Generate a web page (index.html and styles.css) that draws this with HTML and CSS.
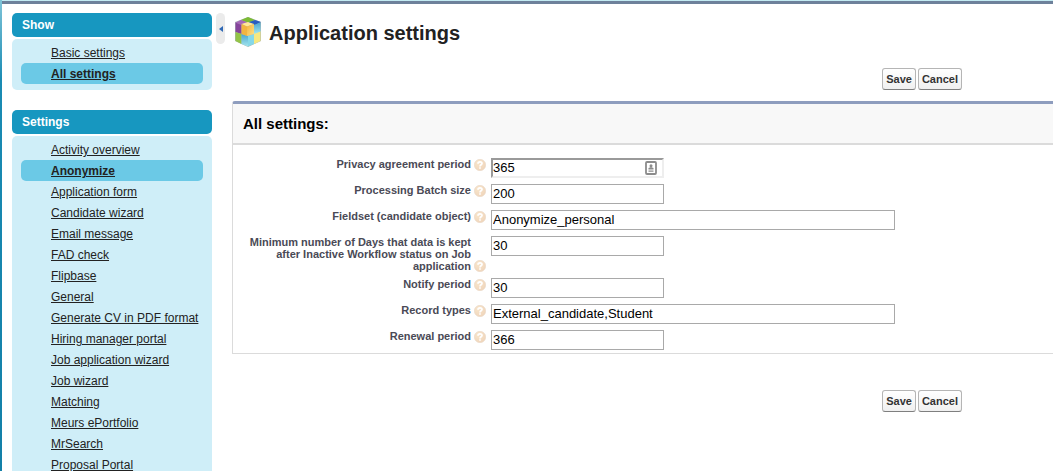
FILE: index.html
```html
<!DOCTYPE html>
<html lang="en">

<head>
    <meta charset="UTF-8">
    <meta name="viewport" content="width=device-width, initial-scale=1.0">
    <title>Application settings</title>
    <link rel="stylesheet" href="styles.css">
</head>

<body>
    <svg width="0" height="0" class="sprite">
        <radialGradient id="help-fill" cx="35%" cy="30%" r="75%">
            <stop offset="0" stop-color="#f8e6cc" />
            <stop offset="1" stop-color="#f0d5bb" />
        </radialGradient>
        <symbol id="help" viewBox="0 0 12 12">
            <circle cx="6" cy="6" r="5.7" fill="url(#help-fill)" stroke="#ead8c8" stroke-width=".6" />
            <path d="M4 4.7C4 2.2 8 2.2 8 4.5C8 5.8 6 5.7 6 7.4M6 8.3V9.8" fill="none" stroke="#fff" stroke-width="1.7" />
        </symbol>
    </svg>

    <div class="page">
        <aside class="sidebar">
            <nav class="menu">
                <h2>Show</h2>
                <ul>
                    <li><a href="#">Basic settings</a></li>
                    <li class="active"><a href="#">All settings</a></li>
                </ul>
            </nav>
            <nav class="menu">
                <h2>Settings</h2>
                <ul>
                    <li><a href="#">Activity overview</a></li>
                    <li class="active"><a href="#">Anonymize</a></li>
                    <li><a href="#">Application form</a></li>
                    <li><a href="#">Candidate wizard</a></li>
                    <li><a href="#">Email message</a></li>
                    <li><a href="#">FAD check</a></li>
                    <li><a href="#">Flipbase</a></li>
                    <li><a href="#">General</a></li>
                    <li><a href="#">Generate CV in PDF format</a></li>
                    <li><a href="#">Hiring manager portal</a></li>
                    <li><a href="#">Job application wizard</a></li>
                    <li><a href="#">Job wizard</a></li>
                    <li><a href="#">Matching</a></li>
                    <li><a href="#">Meurs ePortfolio</a></li>
                    <li><a href="#">MrSearch</a></li>
                    <li><a href="#">Proposal Portal</a></li>
                </ul>
            </nav>
        </aside>

        <button class="collapse" type="button" aria-label="Collapse sidebar">
            <svg width="4" height="6" viewBox="0 0 4 6"><path d="M4 0V6L0 3Z" fill="#2f68b5" /></svg>
        </button>

        <main class="content">
            <header class="title">
                <svg width="28" height="32" viewBox="0 0 28 32">
                    <defs>
                        <linearGradient id="gold" x1="0" y1="0" x2="1" y2="1">
                            <stop offset="0" stop-color="#f6b43c" />
                            <stop offset="1" stop-color="#fbe08a" />
                        </linearGradient>
                        <linearGradient id="cyan" x1="0" y1="0" x2="0" y2="1">
                            <stop offset="0" stop-color="#4aa5cf" />
                            <stop offset="1" stop-color="#a4e6ee" />
                        </linearGradient>
                    </defs>
                    <path d="M14 1L27 6V25L14 31L1 25V6Z" fill="#a9b8b8" />
                    <path d="M14 1L21 4L14 7L7 4Z" fill="#7dbb35" />
                    <path d="M21 4L27 6L21 9L14 6.5Z" fill="#2a5cc0" />
                    <path d="M7 4L14 6.5L7 9L1.5 6.5Z" fill="#a668b8" />
                    <path d="M1.5 6.5L7.5 9V18L1.5 16Z" fill="#86449c" />
                    <path d="M1.5 16L7.5 18V28L1.5 25Z" fill="#94c447" />
                    <path d="M7.5 18L14 20V30.5L7.5 28Z" fill="url(#cyan)" />
                    <path d="M14 20L20 18V28L14 30.5Z" fill="#86d8e8" />
                    <path d="M20 17.5L26.5 15V25L20 28Z" fill="#f7e880" />
                    <path d="M20 9L26.5 6.5V15.5L20 18Z" fill="url(#cyan)" />
                    <path d="M7.5 8L14 6L20 8L13 10.5Z" fill="#ffe89a" />
                    <path d="M7.5 8L13 10.5V20L7.5 18Z" fill="#f3b440" />
                    <path d="M13 10.5L20 8V18L13 20Z" fill="url(#gold)" />
                </svg>
                <h1>Application settings</h1>
            </header>

            <form class="form">
                <div class="buttons">
                    <button class="btn" type="submit">Save</button>
                    <button class="btn" type="button">Cancel</button>
                </div>

                <section class="panel">
                    <h3>All settings:</h3>
                    <div class="fields">
                        <div class="row">
                            <label for="privacy">Privacy agreement period</label>
                            <svg class="help"><use href="#help" /></svg>
                            <div class="input-wrap">
                                <input class="focused" type="text" id="privacy" value="365">
                                <svg class="contact" width="12" height="14" viewBox="0 0 12 14">
                                    <rect x="1" y="1" width="10" height="12" rx="1" fill="#fff" stroke="#8c8c8c" stroke-width="1.8" />
                                    <circle cx="6" cy="4.7" r="1.5" fill="#8c8c8c" />
                                    <path d="M3.5 8.5V7L6 6L8.5 7V8.5ZM3.5 9.5H8.5V10.7H3.5Z" fill="#8c8c8c" />
                                </svg>
                            </div>
                        </div>
                        <div class="row">
                            <label for="batch">Processing Batch size</label>
                            <svg class="help"><use href="#help" /></svg>
                            <input type="text" id="batch" value="200">
                        </div>
                        <div class="row">
                            <label for="fieldset">Fieldset (candidate object)</label>
                            <svg class="help"><use href="#help" /></svg>
                            <input class="wide" type="text" id="fieldset" value="Anonymize_personal">
                        </div>
                        <div class="row tall">
                            <label for="days">Minimum number of Days that data is kept after Inactive Workflow status on Job application</label>
                            <svg class="help"><use href="#help" /></svg>
                            <input type="text" id="days" value="30">
                        </div>
                        <div class="row">
                            <label for="notify">Notify period</label>
                            <svg class="help"><use href="#help" /></svg>
                            <input type="text" id="notify" value="30">
                        </div>
                        <div class="row">
                            <label for="types">Record types</label>
                            <svg class="help"><use href="#help" /></svg>
                            <input class="wide" type="text" id="types" value="External_candidate,Student">
                        </div>
                        <div class="row">
                            <label for="renewal">Renewal period</label>
                            <svg class="help"><use href="#help" /></svg>
                            <input type="text" id="renewal" value="366">
                        </div>
                    </div>
                </section>

                <div class="buttons bottom">
                    <button class="btn" type="submit">Save</button>
                    <button class="btn" type="button">Cancel</button>
                </div>
            </form>
        </main>
    </div>
</body>

</html>
```

FILE: styles.css
```css
* {
    box-sizing: border-box;
}

html {
    height: 100%;
    overflow: hidden;
    background: linear-gradient(#7fc4d8, #1a8bb3 80px, #1380a8);
}

body {
    height: 100%;
    margin: 0 0 0 2px;
    overflow: hidden;
    background: #fff;
    border-top: 1px solid #c3ebf3;
    font-family: "Liberation Sans", Arial, sans-serif;
    font-size: 12px;
    color: #222;
}

h1,
h2,
h3,
ul {
    margin: 0;
    padding: 0;
}

.sprite {
    position: absolute;
}

.page {
    display: flex;
    align-items: flex-start;
    border-top: 3px solid #6e819b;
    padding: 9px 0 0 10px;
}

.sidebar {
    width: 200px;
    flex-shrink: 0;
    display: flex;
    flex-direction: column;
    gap: 20px;
}

.menu h2 {
    height: 24px;
    line-height: 24px;
    padding-left: 10px;
    margin-bottom: 2px;
    border-radius: 5px;
    background: #1797c0;
    color: #fff;
    font-size: 12px;
}

.menu ul {
    list-style: none;
    padding: 3px 9px 6px;
    border-radius: 5px;
    background: #cfeef8;
}

.menu li {
    height: 21px;
    line-height: 22px;
    padding-left: 30px;
    border-radius: 5px;
    white-space: nowrap;
}

.menu a {
    color: #222;
}

.menu .active {
    background: #6bc9e6;
    font-weight: bold;
}

.collapse {
    width: 9px;
    height: 31px;
    flex-shrink: 0;
    display: flex;
    align-items: center;
    justify-content: center;
    margin: 0 7px 0 4px;
    padding: 0;
    border: none;
    border-radius: 5px;
    background: #ebebeb;
}

.content {
    flex: 1;
    min-width: 0;
}

.title {
    display: flex;
    align-items: center;
    gap: 7px;
    padding: 2px 0 0 2px;
    height: 36px;
}

.title h1 {
    font-size: 20px;
    line-height: 24px;
    padding-top: 2px;
}

.buttons {
    display: flex;
    justify-content: flex-end;
    gap: 2px;
    padding: 19px 91px 11px 0;
}

.bottom {
    padding-top: 36px;
}

.btn {
    height: 22px;
    padding: 0 3px;
    border: 1px solid #b5b5b5;
    border-bottom-color: #7f7f7f;
    border-radius: 3px;
    background: linear-gradient(#fff, #f0f0f0);
    color: #333;
    font-family: inherit;
    font-size: 11px;
    font-weight: bold;
}

.panel {
    border: 1px solid #dbdbdb;
    border-top: 3px solid #8e9dbe;
    border-right: none;
    border-radius: 3px 0 0 0;
}

.panel h3 {
    height: 41px;
    line-height: 40px;
    padding-left: 10px;
    border-bottom: 2px solid #dbdbdb;
    background: #f8f8f8;
    color: #000;
    font-size: 15px;
}

.fields {
    padding: 10px 0 0 10px;
}

.row {
    display: flex;
    align-items: flex-start;
    padding: 3px 0;
}

.row label {
    width: 228px;
    line-height: 12px;
    text-align: right;
    font-size: 11px;
    font-weight: bold;
    color: #4a4a56;
}

.help {
    width: 12px;
    height: 12px;
    margin: 1px 5px 0 3px;
}

.tall .help {
    align-self: flex-end;
}

.row input {
    width: 173px;
    height: 20px;
    padding: 0 1px 1px;
    border: 1px solid #a9a9a9;
    background: #fff;
    color: #000;
    font-family: inherit;
    font-size: 13px;
}

.row .wide {
    width: 404px;
}

.row .focused {
    display: block;
    padding: 0 0 2px;
    border: 2px solid #eee;
    border-top-color: #9a9a9a;
    border-left-color: #9a9a9a;
}

.input-wrap {
    position: relative;
}

.contact {
    position: absolute;
    top: 3px;
    right: 7px;
}
```
